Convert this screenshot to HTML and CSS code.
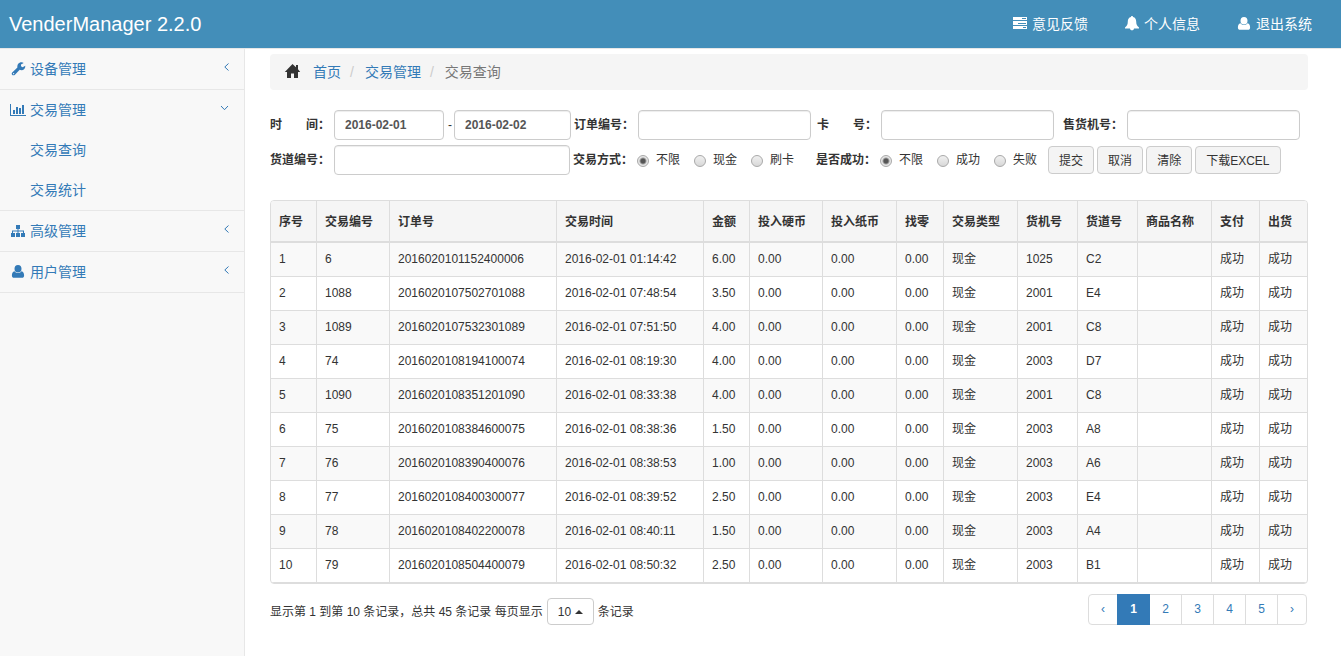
FILE: index.html
```
<!DOCTYPE html>
<html lang="zh-CN">
<head>
    <meta charset="UTF-8">
    <meta name="viewport" content="width=device-width, initial-scale=1.0">
    <title>VenderManager 2.2.0</title>
    <link rel="stylesheet" href="styles.css">
</head>
<body>

    <header class="navbar">
        <a href="#" class="brand">VenderManager 2.2.0</a>
        <nav class="top-links">
            <a href="#">
                <svg class="icon" viewBox="0 0 16 16"><path fill-rule="evenodd" d="M1 1h14v3H1zM10 2v1h4V2zM1 5h14v4H1zM6 7v1h8V7zM1 10h14v3H1zM11 11v1h3v-1z"/></svg>
                意见反馈
            </a>
            <a href="#">
                <svg class="icon" viewBox="0 0 16 16"><path d="M8 0c.7 0 1 .4 1 1 2.300.5 3.200 2.400 3.200 4.500 0 3 .8 4.300 2.800 6v1H1v-1c2-1.700 2.800-3 2.800-6C3.800 3.400 4.700 1.500 7 1c0-.6.3-1 1-1zM6 12.500h4c0 1-.8 1.800-2 1.800s-2-.8-2-1.800z"/></svg>
                个人信息
            </a>
            <a href="#">
                <svg class="icon" viewBox="0 0 16 16"><path d="M8 1a3.500 3.800 0 0 1 0 7.600A3.500 3.800 0 0 1 8 1zM4.500 7.200C5.500 8.500 6.700 9 8 9s2.500-.5 3.500-1.800c1.900.3 2.600 2 2.600 4.300 0 1.500-.8 2.300-2.200 2.300H4.100c-1.400 0-2.200-.8-2.200-2.300 0-2.300.7-4 2.600-4.300z"/></svg>
                退出系统
            </a>
        </nav>
    </header>

    <div class="layout">
        <aside class="sidebar">
            <ul class="menu">
                <li>
                    <a href="#">
                        <svg class="icon" viewBox="0 0 16 16"><path fill-rule="evenodd" d="M2.200 11.400l5.200-5C7 3.800 8.700 1.300 11.500 1.300c.8 0 1.600.2 2.200.6L11 3.500v1.800l1.600 1 2.700-1.600c.2 2.600-1.500 4.500-3.900 4.500-.6 0-1.200-.1-1.700-.4l-5 5.100c-1.600 1.500-4-.9-2.500-2.500zM3.600 12.100a.6.6 0 1 0 .1 0z"/></svg>
                        <span>设备管理</span>
                        <svg class="arrow" viewBox="0 0 10 10"><path d="M8.500 1.500L4.800 5l3.700 3.500"/></svg>
                    </a>
                </li>
                <li>
                    <a href="#">
                        <svg class="icon" viewBox="0 0 16 16"><path d="M0 2h1v11h15v1H0zM3 8h2v4H3zM6 5h2v7H6zM9 6h2v6H9zM12 3h2v9h-2z"/></svg>
                        <span>交易管理</span>
                        <svg class="arrow" viewBox="0 0 10 10"><path d="M1 3l3.500 3.700L8 3"/></svg>
                    </a>
                    <ul class="submenu">
                        <li><a href="#">交易查询</a></li>
                        <li><a href="#">交易统计</a></li>
                    </ul>
                </li>
                <li>
                    <a href="#">
                        <svg class="icon" viewBox="0 0 16 16"><path d="M6 2h4v4H8.500v1.500H14V10h1v4h-4v-4h2V8.500H8.500V10H10v4H6v-4h1.500V8.500H3V10h2v4H1v-4h1V7.500h5.500V6H6z"/></svg>
                        <span>高级管理</span>
                        <svg class="arrow" viewBox="0 0 10 10"><path d="M8.500 1.500L4.800 5l3.700 3.500"/></svg>
                    </a>
                </li>
                <li>
                    <a href="#">
                        <svg class="icon" viewBox="0 0 16 16"><path d="M8 1a3.500 3.800 0 0 1 0 7.600A3.500 3.800 0 0 1 8 1zM4.500 7.200C5.500 8.500 6.700 9 8 9s2.500-.5 3.500-1.800c1.900.3 2.600 2 2.600 4.300 0 1.500-.8 2.300-2.200 2.300H4.100c-1.400 0-2.200-.8-2.200-2.300 0-2.300.7-4 2.600-4.300z"/></svg>
                        <span>用户管理</span>
                        <svg class="arrow" viewBox="0 0 10 10"><path d="M8.500 1.500L4.800 5l3.700 3.500"/></svg>
                    </a>
                </li>
            </ul>
        </aside>

        <main class="content">
            <ol class="breadcrumb">
                <li><svg class="icon" viewBox="0 0 16 16"><path d="M7.500 0L11 3.300V1h2v4.200L15.200 8H13v6H9V9.500H6V14H2V8H-.2z"/></svg></li>
                <li><a href="#">首页</a></li>
                <li><a href="#">交易管理</a></li>
                <li class="active">交易查询</li>
            </ol>

            <form class="search">
                <div class="search-grid">
                    <div class="field">
                        <label for="date-from">时　　间：</label>
                        <input type="text" id="date-from" class="date-from" value="2016-02-01">
                        <span class="dash">-</span>
                        <input type="text" id="date-to" class="date-to" aria-label="结束时间" value="2016-02-02">
                    </div>
                    <div class="field">
                        <label for="order-no">订单编号：</label>
                        <input type="text" id="order-no">
                    </div>
                    <div class="field">
                        <label for="card-no">卡　　号：</label>
                        <input type="text" id="card-no">
                    </div>
                    <div class="field">
                        <label for="machine-no">售货机号：</label>
                        <input type="text" id="machine-no">
                    </div>
                </div>
                <div class="search-row">
                    <div class="field">
                        <label for="road-no">货道编号：</label>
                        <input type="text" id="road-no" class="road-no">
                    </div>
                    <div class="radios" role="radiogroup" aria-labelledby="pay-label">
                        <b id="pay-label">交易方式：</b>
                        <label><input type="radio" name="pay" checked>不限</label>
                        <label><input type="radio" name="pay">现金</label>
                        <label><input type="radio" name="pay">刷卡</label>
                    </div>
                    <div class="radios" role="radiogroup" aria-labelledby="result-label">
                        <b id="result-label">是否成功：</b>
                        <label><input type="radio" name="result" checked>不限</label>
                        <label><input type="radio" name="result">成功</label>
                        <label><input type="radio" name="result">失败</label>
                    </div>
                    <div class="buttons">
                        <button type="button">提交</button>
                        <button type="button">取消</button>
                        <button type="button">清除</button>
                        <button type="button">下载EXCEL</button>
                    </div>
                </div>
            </form>

            <div class="table-box">
                <table>
                    <colgroup>
                        <col class="w-46"><col class="w-73"><col class="w-167"><col class="w-147"><col class="w-46"><col class="w-73"><col class="w-74">
                        <col class="w-47"><col class="w-74"><col class="w-60"><col class="w-60"><col class="w-74"><col class="w-48"><col class="w-47">
                    </colgroup>
                    <thead>
                        <tr><th>序号</th><th>交易编号</th><th>订单号</th><th>交易时间</th><th>金额</th><th>投入硬币</th><th>投入纸币</th><th>找零</th><th>交易类型</th><th>货机号</th><th>货道号</th><th>商品名称</th><th>支付</th><th>出货</th></tr>
                    </thead>
                    <tbody>
                        <tr><td>1</td><td>6</td><td>2016020101152400006</td><td>2016-02-01 01:14:42</td><td>6.00</td><td>0.00</td><td>0.00</td><td>0.00</td><td>现金</td><td>1025</td><td>C2</td><td></td><td>成功</td><td>成功</td></tr>
                        <tr><td>2</td><td>1088</td><td>2016020107502701088</td><td>2016-02-01 07:48:54</td><td>3.50</td><td>0.00</td><td>0.00</td><td>0.00</td><td>现金</td><td>2001</td><td>E4</td><td></td><td>成功</td><td>成功</td></tr>
                        <tr><td>3</td><td>1089</td><td>2016020107532301089</td><td>2016-02-01 07:51:50</td><td>4.00</td><td>0.00</td><td>0.00</td><td>0.00</td><td>现金</td><td>2001</td><td>C8</td><td></td><td>成功</td><td>成功</td></tr>
                        <tr><td>4</td><td>74</td><td>2016020108194100074</td><td>2016-02-01 08:19:30</td><td>4.00</td><td>0.00</td><td>0.00</td><td>0.00</td><td>现金</td><td>2003</td><td>D7</td><td></td><td>成功</td><td>成功</td></tr>
                        <tr><td>5</td><td>1090</td><td>2016020108351201090</td><td>2016-02-01 08:33:38</td><td>4.00</td><td>0.00</td><td>0.00</td><td>0.00</td><td>现金</td><td>2001</td><td>C8</td><td></td><td>成功</td><td>成功</td></tr>
                        <tr><td>6</td><td>75</td><td>2016020108384600075</td><td>2016-02-01 08:38:36</td><td>1.50</td><td>0.00</td><td>0.00</td><td>0.00</td><td>现金</td><td>2003</td><td>A8</td><td></td><td>成功</td><td>成功</td></tr>
                        <tr><td>7</td><td>76</td><td>2016020108390400076</td><td>2016-02-01 08:38:53</td><td>1.00</td><td>0.00</td><td>0.00</td><td>0.00</td><td>现金</td><td>2003</td><td>A6</td><td></td><td>成功</td><td>成功</td></tr>
                        <tr><td>8</td><td>77</td><td>2016020108400300077</td><td>2016-02-01 08:39:52</td><td>2.50</td><td>0.00</td><td>0.00</td><td>0.00</td><td>现金</td><td>2003</td><td>E4</td><td></td><td>成功</td><td>成功</td></tr>
                        <tr><td>9</td><td>78</td><td>2016020108402200078</td><td>2016-02-01 08:40:11</td><td>1.50</td><td>0.00</td><td>0.00</td><td>0.00</td><td>现金</td><td>2003</td><td>A4</td><td></td><td>成功</td><td>成功</td></tr>
                        <tr><td>10</td><td>79</td><td>2016020108504400079</td><td>2016-02-01 08:50:32</td><td>2.50</td><td>0.00</td><td>0.00</td><td>0.00</td><td>现金</td><td>2003</td><td>B1</td><td></td><td>成功</td><td>成功</td></tr>
                    </tbody>
                </table>
            </div>

            <div class="table-footer">
                <div class="page-info">
                    <label for="page-size">显示第 1 到第 10 条记录，总共 45 条记录 每页显示</label>
                    <span class="page-size">
                        <select id="page-size">
                            <option>10</option>
                            <option>25</option>
                            <option>50</option>
                        </select>
                    </span>
                    <span>条记录</span>
                </div>
                <nav class="pagination">
                    <a href="#" class="step">‹</a>
                    <a href="#" class="current">1</a>
                    <a href="#">2</a>
                    <a href="#">3</a>
                    <a href="#">4</a>
                    <a href="#">5</a>
                    <a href="#" class="step">›</a>
                </nav>
            </div>
        </main>
    </div>

</body>
</html>
```
FILE: styles.css
```
* {
    margin: 0;
    padding: 0;
    box-sizing: border-box;
}

body {
    font-family: "Liberation Sans", "Noto Sans CJK SC", sans-serif;
    font-size: 12px;
    line-height: 18px;
    color: #333;
    background-color: #fff;
    display: flex;
    flex-direction: column;
    min-height: 100vh;
}

a {
    color: #337ab7;
    text-decoration: none;
}

ul, ol {
    list-style: none;
}

input, select, button {
    font-family: inherit;
    font-size: 12px;
    color: #333;
}

.icon {
    width: 16px;
    height: 16px;
    fill: currentColor;
    flex-shrink: 0;
    overflow: visible;
}

/* Top bar */
.navbar {
    display: flex;
    justify-content: space-between;
    align-items: center;
    height: 49px;
    padding: 0 29px 0 9px;
    background-color: #438eb9;
    border-bottom: 1px solid #e7e7e7;
}

.navbar a {
    color: #fff;
}

.brand {
    font-size: 20px;
    line-height: 24px;
}

.top-links {
    display: flex;
    gap: 36px;
    font-size: 14px;
    line-height: 20px;
}

.top-links a {
    display: flex;
    align-items: center;
    gap: 4px;
}

/* Sidebar */
.layout {
    display: flex;
    flex: 1;
}

.sidebar {
    width: 245px;
    flex-shrink: 0;
    background-color: #f8f8f8;
    border-right: 1px solid #e7e7e7;
    font-size: 14px;
    line-height: 20px;
}

.menu > li {
    border-bottom: 1px solid #e7e7e7;
}

.menu a {
    display: flex;
    align-items: center;
    gap: 4px;
    height: 40px;
    padding: 0 14px 0 10px;
}

.menu .submenu a {
    padding-left: 30px;
}

.arrow {
    width: 10px;
    height: 10px;
    margin: 13px 0 0 auto;
    align-self: flex-start;
    fill: none;
    stroke: #337ab7;
}

/* Content */
.content {
    flex: 1;
    min-width: 0;
    padding: 5px 33px 20px 25px;
}

.breadcrumb {
    display: flex;
    align-items: center;
    height: 36px;
    padding: 0 15px;
    margin-bottom: 20px;
    background-color: #f5f5f5;
    border-radius: 4px;
    font-size: 14px;
    line-height: 20px;
}

.breadcrumb li {
    display: flex;
    align-items: center;
}

.breadcrumb li:first-child {
    margin-right: 12px;
}

.breadcrumb li + li + li::before {
    content: "/";
    padding: 0 11px 0 9px;
    color: #ccc;
}

.breadcrumb .active {
    color: #777;
}

/* Search form */
.search {
    display: flex;
    flex-direction: column;
    gap: 5px;
    margin-bottom: 25px;
}

.search-grid {
    display: grid;
    grid-template-columns: 304px 243px 246px auto;
}

.search-row {
    display: flex;
    align-items: center;
    flex-wrap: wrap;
}

.field {
    display: flex;
    align-items: center;
    gap: 4px;
}

.field label, .radios b {
    width: 60px;
    font-weight: bold;
    white-space: nowrap;
}

.field input {
    width: 173px;
    height: 30px;
    padding: 0 10px;
    border: 1px solid #ccc;
    border-radius: 4px;
    background-color: #fff;
    box-shadow: inset 0 1px 1px rgba(0, 0, 0, 0.075);
    font-weight: bold;
    color: #555;
}

.field .date-from {
    width: 110px;
}

.field .date-to {
    width: 117px;
}

.field .road-no {
    width: 236px;
}

.dash {
    width: 2px;
}

.radios {
    display: flex;
    align-items: center;
    gap: 14px;
    margin-left: 3px;
}

.radios + .radios {
    margin-left: 22px;
}

.radios b {
    margin-right: -10px;
}

.radios label {
    display: flex;
    align-items: center;
    gap: 7px;
}

.radios input {
    appearance: none;
    width: 12px;
    height: 12px;
    margin-top: 2px;
    border: 1px solid #a9a9a9;
    border-radius: 50%;
    background: linear-gradient(#f0f0f0, #d8d8d8);
}

.radios input:checked {
    background: radial-gradient(circle, #555 2px, #e6e6e6 4px);
}

.buttons {
    display: flex;
    gap: 3px;
    margin-left: 11px;
}

.buttons button {
    height: 28px;
    padding: 0 10px 2px;
    border: 1px solid #ccc;
    border-radius: 4px;
    background-color: #f4f4f4;
    cursor: pointer;
}

.buttons button:hover {
    background-color: #e6e6e6;
}

/* Table */
.table-box {
    border: 1px solid #ddd;
    border-radius: 4px;
    overflow: hidden;
}

table {
    width: 100%;
    table-layout: fixed;
    border-collapse: separate;
    border-spacing: 0;
}

.w-46 { width: 46px; }
.w-47 { width: 47px; }
.w-48 { width: 48px; }
.w-60 { width: 60px; }
.w-73 { width: 73px; }
.w-74 { width: 74px; }
.w-147 { width: 147px; }
.w-167 { width: 167px; }

th, td {
    height: 34px;
    padding: 0 8px 2px;
    border-right: 1px solid #ddd;
    border-bottom: 1px solid #ddd;
    text-align: left;
    white-space: nowrap;
}

th {
    height: 42px;
    padding: 2px 8px 0;
    border-bottom-width: 2px;
    background-color: #f5f5f5;
}

th:last-child, td:last-child {
    border-right: none;
}

tbody tr:nth-child(odd) {
    background-color: #f9f9f9;
}

/* Table footer */
.table-footer {
    display: flex;
    justify-content: space-between;
    align-items: flex-end;
    padding-top: 10px;
}

.page-info {
    display: flex;
    align-items: center;
    gap: 4px;
}

.page-size {
    position: relative;
}

.page-size select {
    display: block;
    appearance: none;
    width: 47px;
    height: 27px;
    padding: 0 10px;
    border: 1px solid #ccc;
    border-radius: 4px;
    background-color: #fff;
}

.page-size::after {
    content: "";
    position: absolute;
    right: 11px;
    top: 12px;
    border: 4px solid transparent;
    border-top: none;
    border-bottom-color: #333;
    pointer-events: none;
}

.pagination {
    display: flex;
    padding-right: 1px;
}

.pagination a {
    min-width: 33px;
    height: 31px;
    margin-left: -1px;
    border: 1px solid #ddd;
    line-height: 29px;
    text-align: center;
}

.pagination .step {
    min-width: 30px;
}

.pagination a:first-child {
    border-radius: 4px 0 0 4px;
}

.pagination a:last-child {
    border-radius: 0 4px 4px 0;
}

.pagination .current {
    border-color: #337ab7;
    background-color: #337ab7;
    color: #fff;
    font-weight: bold;
    z-index: 1;
}
```
